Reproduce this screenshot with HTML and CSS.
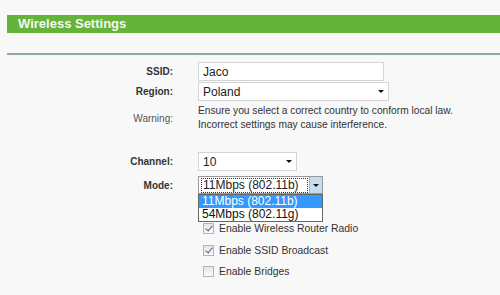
FILE: index.html
```html
<!DOCTYPE html>
<html>
<head>
<meta charset="utf-8">
<link rel="stylesheet" href="styles.css">
</head>
<body>
<div class="page">
  <div class="titlebar">Wireless Settings</div>
  <div class="rule"></div>
  <div class="form">
    <div class="label">SSID:</div>
    <div class="field"><div class="input ssid">Jaco</div></div>

    <div class="label">Region:</div>
    <div class="field"><div class="select region"><span class="val">Poland</span><span class="arrow"></span></div></div>

    <div class="label plain warnlabel">Warning:</div>
    <div class="field warn">Ensure you select a correct country to conform local law.<br>Incorrect settings may cause interference.</div>

    <div class="label channel-label">Channel:</div>
    <div class="field channel-field"><div class="select channel"><span class="val">10</span><span class="arrow"></span></div></div>

    <div class="label">Mode:</div>
    <div class="field mode-field">
      <div class="select mode"><span class="val focus">11Mbps (802.11b)</span><span class="btn"><span class="arrow"></span></span></div>
      <div class="dropdown">
        <div class="opt sel">11Mbps (802.11b)</div>
        <div class="opt">54Mbps (802.11g)</div>
      </div>
    </div>

    <div class="label"></div>
    <div class="field checks">
      <div class="check"><span class="box on"></span>Enable Wireless Router Radio</div>
      <div class="check"><span class="box on"></span>Enable SSID Broadcast</div>
      <div class="check"><span class="box"></span>Enable Bridges</div>
    </div>
  </div>
</div>
</body>
</html>
```
FILE: styles.css
```css
html, body {
  margin: 0;
  padding: 0;
  background: #f8f8f8;
}
body {
  font-family: "Liberation Sans", Arial, sans-serif;
  font-size: 10.4px;
  color: #222;
  width: 500px;
  height: 295px;
  overflow: hidden;
}
.page {
  padding-top: 15px;
}
.titlebar {
  margin-left: 7px;
  height: 18px;
  line-height: 18px;
  background: #64b43a;
  color: #f3f8ee;
  font-weight: bold;
  font-size: 13px;
  padding-left: 11px;
}
.rule {
  margin: 20px 0 0 7px;
  height: 2px;
  background: #92a99a;
}
.form {
  display: grid;
  grid-template-columns: 173px 1fr;
  column-gap: 25px;
  padding-top: 7px;
}
.label {
  text-align: right;
  font-weight: bold;
  color: #333;
  font-size: 10px;
  display: flex;
  align-items: center;
  justify-content: flex-end;
  height: 19px;
  margin-bottom: 1px;
}
.label.plain {
  font-weight: normal;
  color: #555;
  height: auto;
  margin-bottom: 0;
}
.field {
  min-height: 19px;
  margin-bottom: 1px;
}
.input, .select {
  box-sizing: border-box;
  height: 19px;
  background: #fff;
  border: 1px solid #d4d4d4;
  display: flex;
  align-items: center;
  padding-left: 4px;
  font-size: 12px;
  color: #222;
}
.ssid { width: 186px; }
.region { width: 191px; }
.channel { width: 99px; }
.select .val { flex: 1; }
.arrow {
  width: 0;
  height: 0;
  border-left: 3px solid transparent;
  border-right: 3px solid transparent;
  border-top: 3px solid #111;
  margin-right: 4px;
}
.warn {
  line-height: 14px;
  padding-top: 2px;
  color: #333;
  font-size: 10.2px;
}
.warnlabel {
  padding-top: 2px;
}
.channel-label, .channel-field {
  margin-top: 19px;
  margin-bottom: 5px;
}
.mode-field {
  position: relative;
}
.mode {
  width: 125px;
  height: 18px;
  padding-left: 2px;
  border-color: #9a9a9a;
}
.mode .focus {
  border: 1px dotted #333;
  padding: 0 1px;
  line-height: 13px;
  margin-right: 1px;
  white-space: nowrap;
}
.mode .btn {
  width: 12px;
  height: 16px;
  background: #c8dcef;
  border-left: 1px solid #9bb5cf;
  display: flex;
  align-items: center;
  justify-content: center;
}
.mode .btn .arrow { margin: 0; }
.dropdown {
  position: absolute;
  left: 0;
  top: 18px;
  box-sizing: border-box;
  width: 125px;
  background: #fff;
  border: 1px solid #666;
  z-index: 2;
  font-size: 12px;
}
.opt {
  height: 13px;
  line-height: 13px;
  padding-left: 3px;
  color: #111;
  white-space: nowrap;
}
.opt.sel {
  background: #3399ff;
  color: #fff;
}
.checks {
  padding-top: 27px;
  padding-left: 5px;
  display: flex;
  flex-direction: column;
  gap: 10.5px;
}
.check {
  display: flex;
  align-items: center;
  height: 11px;
  color: #333;
  font-size: 10.4px;
}
.box {
  box-sizing: border-box;
  width: 11px;
  height: 11px;
  border: 1px solid #b4b4b4;
  background: linear-gradient(#e6e6e6, #fafafa);
  margin-right: 5px;
  position: relative;
}
.box.on::after {
  content: "";
  position: absolute;
  left: 3px;
  top: 0px;
  width: 3px;
  height: 6px;
  border-right: 1.5px solid #4b5f8c;
  border-bottom: 1.5px solid #4b5f8c;
  transform: rotate(40deg);
}
```
